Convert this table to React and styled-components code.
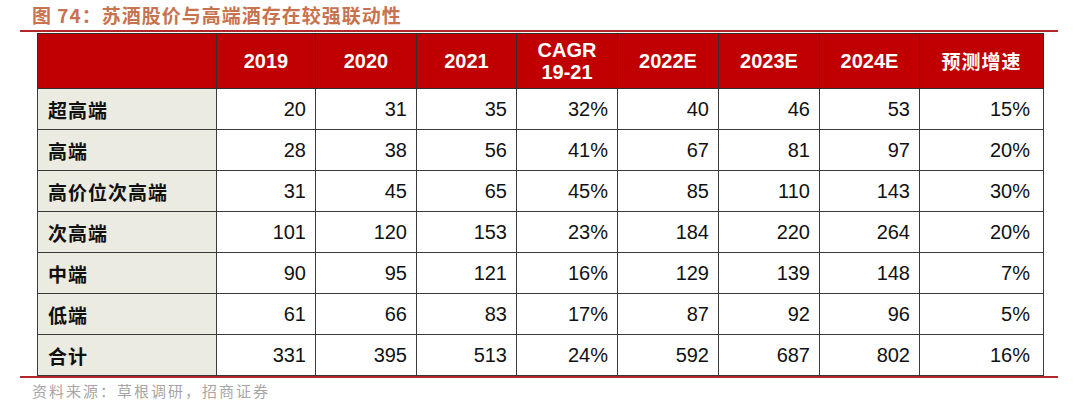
import React from "react";
import styled, { createGlobalStyle } from "styled-components";

const GlobalStyle = createGlobalStyle`
  body {
    margin: 0;
    background: #ffffff;
  }
`;

const header = ["2019", "2020", "2021", "CAGR\n19-21", "2022E", "2023E", "2024E", "预测增速"];

const rows = [
  ["超高端", "20", "31", "35", "32%", "40", "46", "53", "15%"],
  ["高端", "28", "38", "56", "41%", "67", "81", "97", "20%"],
  ["高价位次高端", "31", "45", "65", "45%", "85", "110", "143", "30%"],
  ["次高端", "101", "120", "153", "23%", "184", "220", "264", "20%"],
  ["中端", "90", "95", "121", "16%", "129", "139", "148", "7%"],
  ["低端", "61", "66", "83", "17%", "87", "92", "96", "5%"],
  ["合计", "331", "395", "513", "24%", "592", "687", "802", "16%"],
];

const widths = [179, 99, 101, 100, 101, 101, 101, 100, 124];

export default function App() {
  return (
    <>
      <GlobalStyle />
      <Page>
        <TitleBar>
          图 74：苏酒股价与高端酒存在较强联动性
        </TitleBar>
        <TableWrap>
          <Table>
            <colgroup>
              {widths.map((w, i) => (
                <col key={i} style={{ width: w }} />
              ))}
            </colgroup>
            <thead>
              <tr>
                <HeadCell />
                {header.map((h, i) => (
                  <HeadCell key={i} $cjk={i === header.length - 1}>
                    {h.split("\n").map((line, j) => (
                      <div key={j}>{line}</div>
                    ))}
                  </HeadCell>
                ))}
              </tr>
            </thead>
            <tbody>
              {rows.map((r, i) => (
                <tr key={i}>
                  <LabelCell>{r[0]}</LabelCell>
                  {r.slice(1).map((v, j) => (
                    <NumCell key={j} $last={j === r.length - 2}>
                      {v}
                    </NumCell>
                  ))}
                </tr>
              ))}
            </tbody>
          </Table>
        </TableWrap>
        <Source>资料来源：草根调研，招商证券</Source>
      </Page>
    </>
  );
}

const Page = styled.div`
  width: 1038px;
  margin-left: 20px;
  display: flex;
  flex-direction: column;
`;

const TitleBar = styled.div`
  height: 30px;
  padding-left: 12px;
  border-bottom: 2px solid #b3262a;
  font-family: "Noto Sans CJK SC", sans-serif;
  font-weight: 700;
  font-size: 19px;
  letter-spacing: 1px;
  line-height: 30px;
  color: #c8734f;
  white-space: nowrap;
`;

const TableWrap = styled.div`
  margin-left: 17px;
  width: 1006px;
  border-bottom: 2px solid #b3262a;
  margin-left: 0;
  padding-left: 17px;
  padding-right: 15px;
`;

const Table = styled.table`
  width: 1006px;
  table-layout: fixed;
  border-collapse: collapse;
  margin-top: 1px;
  tr {
    height: 41px;
  }
  thead tr {
    height: 55px;
  }
`;

const HeadCell = styled.th`
  background: #c00000;
  color: #ffffff;
  border: 1px solid #2f2f2f;
  padding: 0;
  text-align: center;
  vertical-align: middle;
  font-family: ${(p) =>
    p.$cjk ? '"Noto Sans CJK SC", serif' : '"Liberation Sans", Arial, sans-serif'};
  font-weight: 700;
  font-size: ${(p) => (p.$cjk ? "19px" : "20px")};
  letter-spacing: ${(p) => (p.$cjk ? "1px" : "0")};
  line-height: 22px;
`;

const LabelCell = styled.td`
  background: #ecebe1;
  border: 1px solid #3a3a3a;
  padding: 0 0 0 10px;
  font-family: "Noto Sans CJK SC", sans-serif;
  font-weight: 700;
  font-size: 19px;
  letter-spacing: 1px;
  color: #111;
  white-space: nowrap;
`;

const NumCell = styled.td`
  background: #ffffff;
  border: 1px solid #3a3a3a;
  padding: 0 ${(p) => (p.$last ? "13px" : "9px")} 0 0;
  text-align: right;
  font-family: "Liberation Sans", Arial, sans-serif;
  font-size: 20px;
  color: #111;
`;

const Source = styled.div`
  padding-left: 12px;
  margin-top: 3px;
  font-family: "Noto Sans CJK SC", sans-serif;
  font-size: 15px;
  letter-spacing: 2px;
  color: #a6a6a6;
  line-height: 20px;
`;
